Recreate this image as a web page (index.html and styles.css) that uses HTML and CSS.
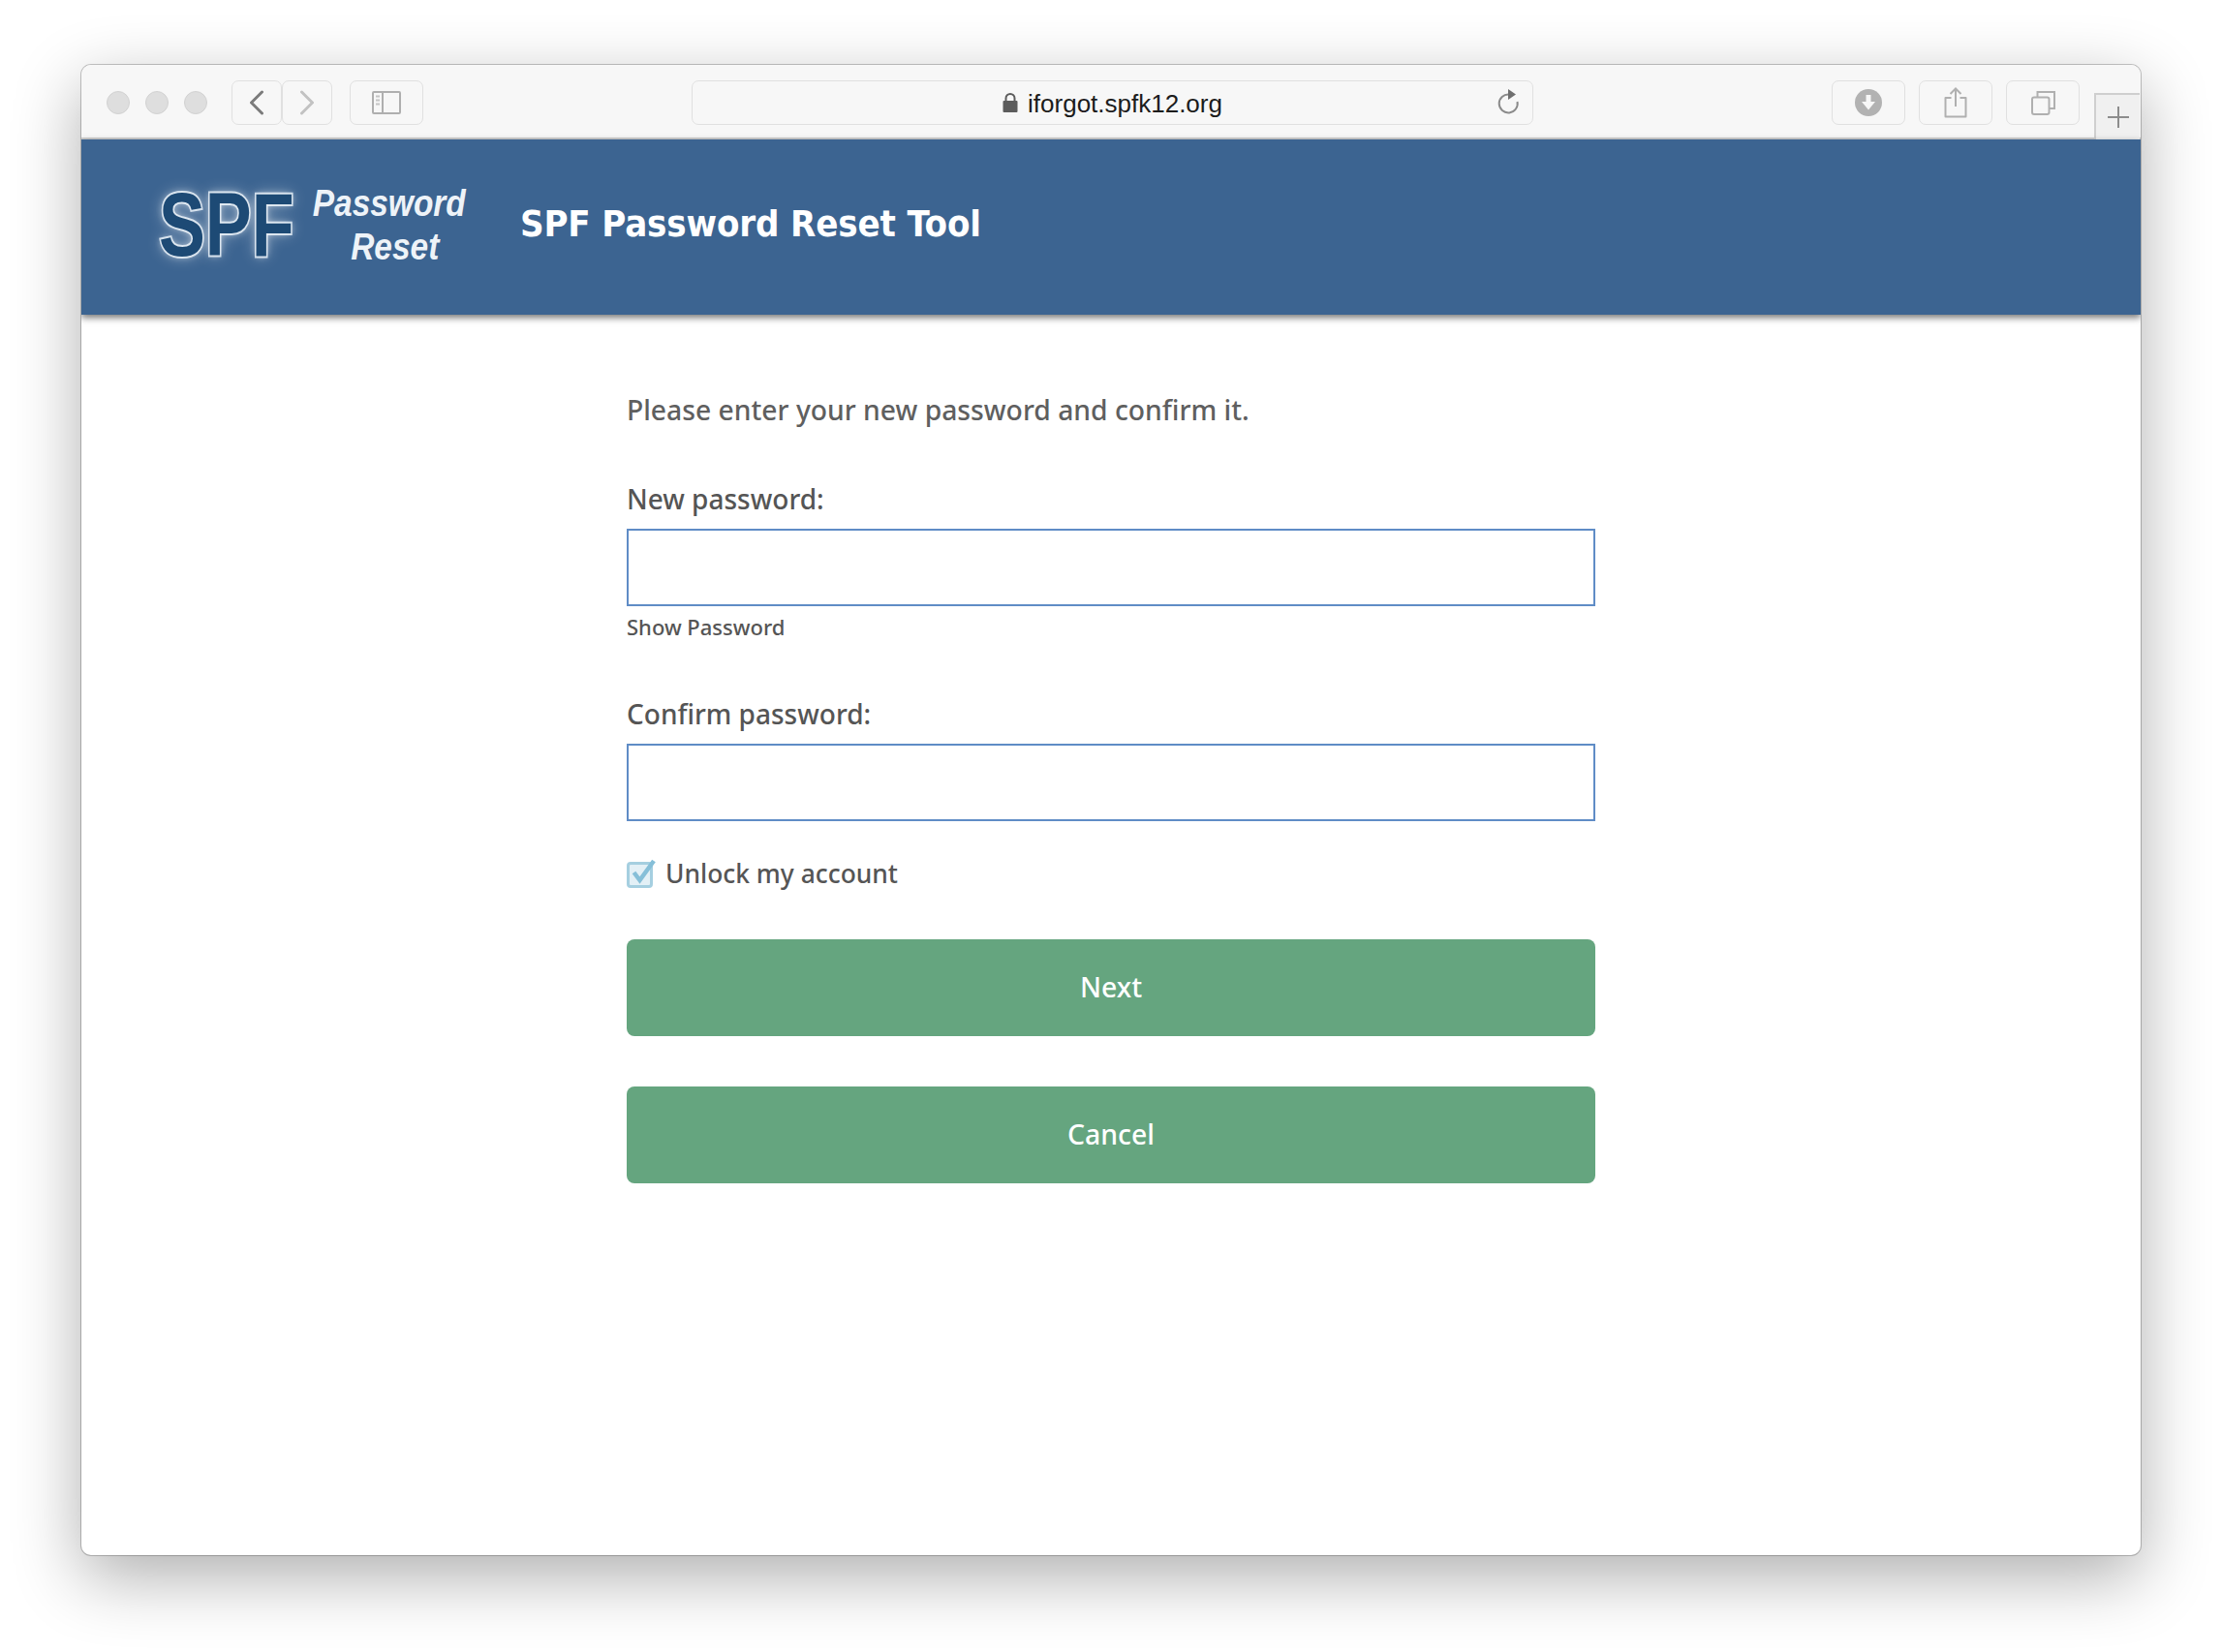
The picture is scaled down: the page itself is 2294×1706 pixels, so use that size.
FILE: index.html
```html
<!DOCTYPE html>
<html lang="en">
<head>
  <meta charset="UTF-8" />
  <title>SPF Password Reset Tool</title>
  <link rel="stylesheet" href="styles.css">
</head>
<body>

  <div class="window">

    <!-- Browser toolbar -->
    <div class="toolbar">
      <div class="lights">
        <span class="light"></span>
        <span class="light"></span>
        <span class="light"></span>
      </div>

      <div class="nav-group">
        <span class="tool-btn nav-btn">
          <svg width="16" height="26" viewBox="0 0 16 26"><path d="M13.5 2 L2.5 13 L13.5 24" fill="none" stroke="#7b7b7b" stroke-width="3" stroke-linecap="round" stroke-linejoin="round"/></svg>
        </span>
        <span class="tool-btn nav-btn">
          <svg width="16" height="26" viewBox="0 0 16 26"><path d="M2.5 2 L13.5 13 L2.5 24" fill="none" stroke="#c2c2c2" stroke-width="3" stroke-linecap="round" stroke-linejoin="round"/></svg>
        </span>
      </div>

      <span class="tool-btn wide-btn">
        <svg width="30" height="24" viewBox="0 0 30 24">
          <rect x="1" y="1" width="28" height="22" rx="1" fill="none" stroke="#afafaf" stroke-width="2"/>
          <path d="M11 1 V23" stroke="#afafaf" stroke-width="2"/>
          <path d="M4 5.5 H8 M4 9.5 H8 M4 13.5 H8" stroke="#c4c4c4" stroke-width="2"/>
        </svg>
      </span>

      <div class="url-bar">
        <svg class="lock" width="16" height="22" viewBox="0 0 16 22">
          <path d="M3.5 10 V6.5 a4.5 4.5 0 0 1 9 0 V10" fill="none" stroke="#5c5c5c" stroke-width="2"/>
          <rect x="0.5" y="9" width="15" height="12" rx="1" fill="#5c5c5c"/>
        </svg>
        <span class="url-text">iforgot.spfk12.org</span>
        <svg class="reload" width="24" height="28" viewBox="0 0 24 28">
          <path d="M13 5.5 A9.5 9.5 0 1 0 21.5 13" fill="none" stroke="#8b8b8b" stroke-width="2"/>
          <path d="M12 0 L20 5.5 L12 11 Z" fill="#6f6f6f"/>
        </svg>
      </div>

      <div class="right-tools">
        <span class="tool-btn wide-btn">
          <svg width="28" height="28" viewBox="0 0 28 28">
            <circle cx="14" cy="14" r="14" fill="#b2b2b2"/>
            <path d="M11.5 6 H16.5 V13 H21 L14 21.5 L7 13 H11.5 Z" fill="#f7f7f7"/>
          </svg>
        </span>
        <span class="tool-btn wide-btn">
          <svg width="24" height="32" viewBox="0 0 24 32">
            <path d="M7.5 11 H1.5 V30.5 H22.5 V11 H16.5" fill="none" stroke="#b0b0b0" stroke-width="2" stroke-linejoin="round"/>
            <path d="M12 2 V20 M6.5 7 L12 1.5 L17.5 7" fill="none" stroke="#b0b0b0" stroke-width="2"/>
          </svg>
        </span>
        <span class="tool-btn wide-btn">
          <svg width="25" height="25" viewBox="0 0 25 25">
            <rect x="1" y="6.5" width="17.5" height="17.5" rx="2" fill="none" stroke="#b0b0b0" stroke-width="2"/>
            <path d="M6.5 6 V1 H24 V18 H19" fill="none" stroke="#b0b0b0" stroke-width="2"/>
          </svg>
        </span>
      </div>

      <span class="new-tab">
        <svg width="24" height="24" viewBox="0 0 24 24"><path d="M12 1 V23 M1 12 H23" stroke="#8c8c8c" stroke-width="2"/></svg>
      </span>
    </div>

    <!-- Site header -->
    <header class="site-header">
      <div class="logo">
        <span class="logo-spf">SPF</span>
        <div class="logo-words">
          <span class="logo-password">Password</span>
          <span class="logo-reset">Reset</span>
        </div>
      </div>
      <h1 class="site-title">SPF Password Reset Tool</h1>
    </header>

    <!-- Reset form -->
    <form class="reset-form">
      <p class="intro">Please enter your new password and confirm it.</p>

      <label class="field-label" for="new-password">New password:</label>
      <input class="field-input" id="new-password" type="password">
      <span class="show-password">Show Password</span>

      <label class="field-label confirm-label" for="confirm-password">Confirm password:</label>
      <input class="field-input" id="confirm-password" type="password">

      <div class="unlock-row">
        <svg width="30" height="30" viewBox="0 0 30 30">
          <rect x="1.5" y="4.5" width="24" height="24" rx="2.5" fill="#e3f0f6" stroke="#a5cfe0" stroke-width="3"/>
          <path d="M7.5 14 L13.5 22 L28 2" fill="none" stroke="#86bfd8" stroke-width="4.5"/>
        </svg>
        <span class="unlock-text">Unlock my account</span>
      </div>

      <button class="action-btn" type="button">Next</button>
      <button class="action-btn" type="button">Cancel</button>
    </form>

  </div>

</body>
</html>
```

FILE: styles.css
```css
body {
  margin: 0;
  padding: 67px 84px 0;
  height: 1706px;
  box-sizing: border-box;
  background: #fff;
  font-family: "Noto Sans", sans-serif;
  overflow: hidden;
}

.window {
  height: 1539px;
  border-radius: 10px;
  background: #fff;
  overflow: hidden;
  box-shadow: 0 0 0 1px rgba(0,0,0,0.22), 0 22px 70px rgba(0,0,0,0.32);
}

/* Browser toolbar */
.toolbar {
  display: flex;
  align-items: flex-start;
  height: 77px;
  padding-top: 16px;
  box-sizing: border-box;
  background: #f7f7f7;
  border-bottom: 2px solid #cfcfcf;
}

.lights {
  display: flex;
  gap: 16px;
  margin: 11px 0 0 26px;
}

.light {
  width: 24px;
  height: 24px;
  border-radius: 50%;
  box-sizing: border-box;
  background: #dedede;
  border: 1px solid #d2d2d2;
}

.tool-btn {
  display: flex;
  align-items: center;
  justify-content: center;
  height: 46px;
  box-sizing: border-box;
  border: 1px solid #e0e0e0;
  border-radius: 7px;
  background: #f7f7f7;
}

.nav-group {
  display: flex;
  margin-left: 25px;
}

.nav-btn {
  width: 52px;
}

.wide-btn {
  width: 76px;
}

.nav-group + .wide-btn {
  margin-left: 18px;
}

.url-bar {
  display: flex;
  align-items: center;
  justify-content: center;
  position: relative;
  width: 869px;
  height: 46px;
  margin-left: 277px;
  box-sizing: border-box;
  border: 1px solid #e0e0e0;
  border-radius: 7px;
}

.lock {
  margin-right: 10px;
}

.url-text {
  font-family: "Liberation Sans", sans-serif;
  font-size: 26px;
  line-height: 46px;
  padding-top: 2px;
  color: #1c1c1c;
}

.reload {
  position: absolute;
  right: 13px;
  top: 8px;
}

.right-tools {
  display: flex;
  gap: 14px;
  margin-left: 308px;
}

.new-tab {
  display: flex;
  align-items: center;
  justify-content: center;
  width: 47px;
  height: 48px;
  margin: 13px 0 0 15px;
  box-sizing: border-box;
  background: #f0f0f0;
  border: 2px solid #cfcfcf;
  border-width: 2px 0 0 2px;
}

/* Site header */
.site-header {
  position: relative;
  display: flex;
  align-items: center;
  height: 181px;
  background: #3c6491;
  box-shadow: 0 3px 7px rgba(0,0,0,0.55);
}

.logo {
  display: flex;
  margin-left: 80px;
  width: 373px;
}

.logo-spf {
  display: block;
  width: 143px;
  font-family: "Liberation Sans", sans-serif;
  font-size: 92px;
  font-weight: 700;
  line-height: 100px;
  color: #1d4a75;
  -webkit-text-stroke: 4px #c9d9e8;
  paint-order: stroke fill;
  text-shadow: 0 0 8px rgba(255,255,255,0.55), 0 0 18px rgba(255,255,255,0.45);
  transform: scaleX(0.78);
  transform-origin: left center;
  margin-top: -6px;
}

.logo-words {
  display: flex;
  flex-direction: column;
  align-items: center;
  width: 160px;
  margin: 0 0 0 15px;
  font-family: "Liberation Sans", sans-serif;
  font-style: italic;
  font-weight: 700;
  font-size: 38px;
  line-height: 45px;
  color: #eef3f8;
}

.logo-password {
  transform: scaleX(0.88);
}

.logo-reset {
  margin-left: 12px;
  transform: scaleX(0.88);
}

.site-title {
  margin: -7px 0 0;
  font-family: "DejaVu Sans Condensed", "DejaVu Sans", sans-serif;
  font-size: 38px;
  font-weight: 700;
  letter-spacing: -0.15px;
  color: #fff;
}

/* Reset form */
.reset-form {
  display: flex;
  flex-direction: column;
  width: 1000px;
  margin: 0 auto;
  padding-top: 78px;
  color: #555;
}

.intro {
  margin: 0 0 52px;
  font-size: 28.27px;
  font-weight: 500;
  line-height: 40px;
  color: #5f5f5f;
}

.field-label {
  font-size: 28px;
  font-weight: 500;
  line-height: 40px;
  margin-bottom: 11px;
  color: #555;
}

.field-input {
  height: 80px;
  box-sizing: border-box;
  border: 2px solid #5f8cc6;
  background: #fff;
  outline: none;
}

.show-password {
  margin-top: 6px;
  font-size: 22px;
  font-weight: 500;
  line-height: 30px;
  color: #555;
}

.confirm-label {
  margin-top: 55px;
}

.unlock-row {
  display: flex;
  align-items: center;
  gap: 10px;
  margin: 34px 0 48px;
  font-size: 26.4px;
  font-weight: 500;
  line-height: 40px;
  color: #555;
}

.action-btn {
  height: 100px;
  margin-bottom: 52px;
  padding-bottom: 4px;
  border: none;
  border-radius: 8px;
  background: #65a57f;
  color: #fff;
  font-family: "Noto Sans", sans-serif;
  font-size: 28.4px;
  font-weight: 500;
}
```
